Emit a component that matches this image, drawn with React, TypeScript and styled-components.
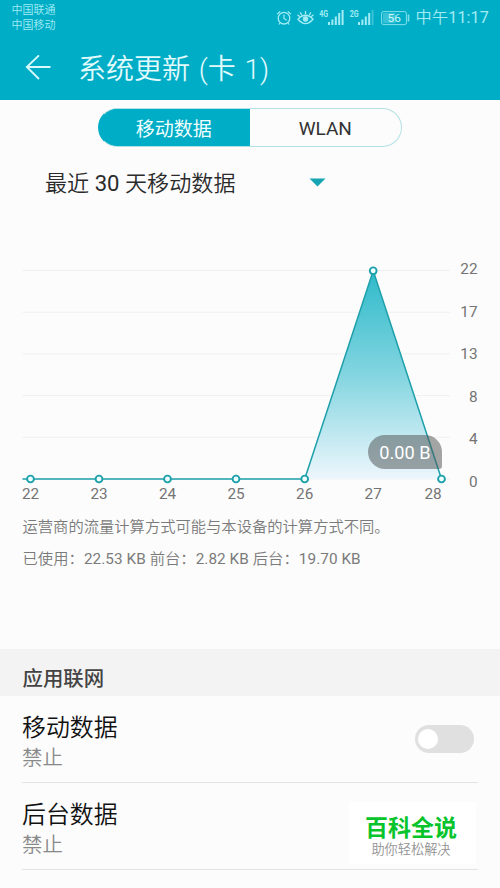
import React from "react";
import styled, { createGlobalStyle } from "styled-components";

const GlobalStyle = createGlobalStyle`
  * { box-sizing: border-box; }
  body {
    margin: 0;
    background: #fcfcfc;
    font-family: Roboto, "Noto Sans CJK SC", sans-serif;
  }
`;

const Screen = styled.main`
  width: 500px;
  height: 888px;
  overflow: hidden;
  background: #fcfcfc;
  display: flex;
  flex-direction: column;
`;

const Header = styled.header`
  height: 100px;
  flex: none;
  background: #00adc6;
  color: #e2fbfd;
`;

const StatusBar = styled.div`
  height: 35px;
  display: flex;
  justify-content: space-between;
  padding: 1px 11px 0 11.5px;
  color: #a2ecf5;
`;

const Carriers = styled.div`
  padding-top: 2px;
  font-size: 11px;
  line-height: 15px;
  font-weight: 350;
  white-space: nowrap;
`;

const StatusRight = styled.div`
  display: flex;
  align-items: center;
  height: 32px;
`;

const Latin = styled.span`
  font-weight: 400;
`;

const Clock = styled.span`
  font-size: 16.2px;
  line-height: 20px;
  font-weight: 350;
  letter-spacing: 0.1px;
  white-space: nowrap;
  margin: 1px 0 0 6px;
`;

const TitleBar = styled.div`
  display: flex;
  align-items: center;
  height: 65px;
  padding-left: 25px;
  gap: 27px;
`;

const Title = styled.h1`
  margin: 5px 0 0;
  font-size: 28px;
  line-height: 36px;
  font-weight: 350;
  word-spacing: 2px;
  white-space: nowrap;
`;

const Tabs = styled.div`
  display: flex;
  flex: none;
  width: 304px;
  height: 39px;
  margin: 8px 0 0 98px;
  border: 1px solid #b2e1e4;
  border-left-color: #00adc6;
  border-radius: 20px;
  background: linear-gradient(90deg, #00adc6 50%, transparent 50%) border-box;
  overflow: hidden;
`;

const Tab = styled.button<{ $active?: boolean }>`
  flex: 1;
  margin: ${(p) => (p.$active ? "-1px 0 -1px -1px" : "0")};
  padding: ${(p) => (p.$active ? "4px 0 0" : "2px 0 0")};
  border: 0;
  background: ${(p) => (p.$active ? "#00adc6" : "transparent")};
  color: ${(p) => (p.$active ? "#f0ffff" : "#333")};
  font-family: inherit;
  font-size: 19px;
  line-height: 24px;
`;

const PeriodSelect = styled.div`
  display: flex;
  flex: none;
  align-items: center;
  justify-content: space-between;
  width: 281px;
  height: 34px;
  margin: 19px 0 8px 45px;
  color: #2b2b2b;
  font-size: 22.1px;
  line-height: 30px;
  font-weight: 350;
  white-space: nowrap;
  svg { margin-bottom: 2px; }
`;

const ChartArea = styled.section`
  position: relative;
  flex: none;
  height: 300px;
  svg { display: block; }
`;

const ValueBubble = styled.div`
  position: absolute;
  left: 368px;
  top: 227px;
  width: 74px;
  height: 34px;
  border-radius: 17px 17px 3px 17px;
  background: rgba(80, 84, 85, 0.52);
  color: #fff;
  font-size: 18.2px;
  line-height: 35px;
  text-align: center;
`;

const Notes = styled.section`
  flex: none;
  height: 141px;
  padding: 4px 0 0 22.5px;
  color: #7b7b7b;
  font-size: 15.3px;
  font-weight: 350;
  line-height: 31.5px;
  white-space: nowrap;
  p { margin: 0; }
`;

const Usage = styled.p`
  letter-spacing: 0.06px;
`;

const SectionTitle = styled.h2`
  flex: none;
  margin: 0;
  height: 47px;
  padding: 7px 0 0 22.5px;
  background: #f3f3f3;
  color: #444;
  font-size: 20.4px;
  font-weight: 500;
  line-height: 46px;
`;

const SettingRow = styled.div`
  position: relative;
  display: flex;
  flex: none;
  align-items: center;
  justify-content: space-between;
  height: 87px;
  margin: 0 22px;
  padding-right: 4px;
  border-bottom: 1px solid #e3e3e3;
`;

const SettingText = styled.div`
  display: flex;
  flex-direction: column;
  padding-top: 5px;
`;

const SettingName = styled.span`
  color: #111;
  font-size: 23.9px;
  font-weight: 350;
  line-height: 32px;
`;

const SettingState = styled.span`
  color: #898989;
  font-size: 20.4px;
  font-weight: 350;
  line-height: 28px;
`;

const Switch = styled.span`
  display: flex;
  align-items: center;
  width: 59px;
  height: 28px;
  padding-left: 3px;
  border-radius: 14px;
  background: #e0e0e0;
`;

const Knob = styled.span`
  width: 20px;
  height: 20px;
  border-radius: 50%;
  background: #fff;
`;

const Watermark = styled.div`
  position: absolute;
  left: 327px;
  top: 19px;
  width: 127px;
  height: 62px;
  padding-top: 14px;
  background: #fff;
  text-align: center;
  white-space: nowrap;
`;

const Brand = styled.div`
  padding-right: 3px;
  color: #08c42c;
  font-size: 23px;
  line-height: 25px;
  font-weight: 700;
`;

const Slogan = styled.div`
  padding-right: 3px;
  color: #929292;
  font-size: 13.2px;
  font-weight: 350;
  line-height: 18px;
`;

const bars = [3, 5.5, 8.5, 12, 15];

function StatusIcons() {
  return (
    <svg width="134" height="32" viewBox="276 0 134 32" fill="none" stroke="#a2ecf5">
      <circle cx="284" cy="17.2" r="5.8" strokeWidth="1.3" />
      <path d="M284 13.5v4l2.7 1.7M277.2 13.2l3-2.8M290.8 13.2l-3-2.8M280 22l-1.2 1.5M288 22l1.2 1.5" strokeWidth="1.2" />
      <path d="M298 18.2Q305.5 10.3 313 18.2Q305.5 27 298 18.2Z" strokeWidth="1.4" />
      <circle cx="305.5" cy="18" r="2.4" fill="#a2ecf5" strokeWidth="1" />
      <path d="M305.5 10v3.3M300.2 11.2l1.5 3M310.8 11.2l-1.5 3M297.5 13.8l2.4 2M313.5 13.8l-2.4 2" strokeWidth="1.3" />
      <g fill="#a2ecf5" stroke="none">
        <text transform="translate(319.3 15.5) scale(.74 1)" fontSize="9.6" fontWeight="700">4G</text>
        <text transform="translate(349.8 15.5) scale(.74 1)" fontSize="9.6" fontWeight="700">2G</text>
        {bars.map((h, i) => (
          <rect key={i} x={328 + i * 3.4} y={24 - h} width="2" height={h} />
        ))}
        {bars.map((h, i) => (
          <rect key={i} x={358 + i * 3.4} y={24 - h} width="2" height={h} opacity={i === 4 ? 0.35 : 1} />
        ))}
      </g>
      <rect x="381.6" y="10.6" width="24.8" height="13" rx="1.8" strokeWidth="1" opacity=".8" />
      <rect x="383" y="12" width="12.5" height="10.2" fill="#a2ecf5" stroke="none" opacity=".35" />
      <path d="M408.5 13.5v7" strokeWidth="1.6" opacity=".8" />
      <text x="394.2" y="21.2" textAnchor="middle" fontSize="11.8" fill="#c8f8fb" stroke="none">56</text>
    </svg>
  );
}

const BASELINE = 271;
const points = [
  { day: 22, x: 30.5, y: BASELINE },
  { day: 23, x: 99, y: BASELINE },
  { day: 24, x: 167.5, y: BASELINE },
  { day: 25, x: 236, y: BASELINE },
  { day: 26, x: 304.7, y: BASELINE },
  { day: 27, x: 373.2, y: 62.8 },
  { day: 28, x: 441.5, y: BASELINE, labelX: 433 },
];
const ticks = [22, 17, 13, 8, 4, 0];

function UsageChart() {
  return (
    <svg width="500" height="300" viewBox="0 0 500 300">
      <defs>
        <linearGradient id="usageFill" x1="0" y1="0" x2="0" y2="1">
          <stop offset="0" stopColor="#2fbaca" />
          <stop offset="0.5" stopColor="#83d5e0" />
          <stop offset="1" stopColor="#edf6fc" />
        </linearGradient>
      </defs>
      {ticks.map((t, i) => (
        <g key={t}>
          <path d={`M22.5 ${62.5 + i * 41.7}H450`} stroke="#f0f0f0" />
          <text x="477.5" y={66 + i * 42.5} textAnchor="end" fontSize="15.3" fill="#747474">{t}</text>
        </g>
      ))}
      <path d={`M304.7 ${BASELINE}L373.2 62.8L441.5 ${BASELINE}Z`} fill="url(#usageFill)" />
      <path
        d={`M22.5 ${BASELINE}H304.7L373.2 62.8L441.5 ${BASELINE}`}
        fill="none"
        stroke="#1ea0aa"
        strokeWidth="1.5"
        strokeLinejoin="bevel"
      />
      {points.map((p) => (
        <g key={p.day}>
          <circle cx={p.x} cy={p.y} r="3.4" fill="#eeffff" stroke="#1ea0aa" strokeWidth="1.9" />
          <text x={p.labelX ?? p.x} y="290.7" textAnchor="middle" fontSize="15.3" fill="#747474">{p.day}</text>
        </g>
      ))}
    </svg>
  );
}

export default function App() {
  return (
    <Screen>
      <GlobalStyle />
      <Header>
        <StatusBar>
          <Carriers>
            <div>中国联通</div>
            <div>中国移动</div>
          </Carriers>
          <StatusRight>
            <StatusIcons />
            <Clock>中午<Latin>11:17</Latin></Clock>
          </StatusRight>
        </StatusBar>
        <TitleBar>
          <svg width="26" height="26" viewBox="0 0 26 26" fill="none" stroke="#d8fafc" strokeWidth="1.8">
            <path d="M25.5 12H1.8M14 0.3L1.8 12L14 24" />
          </svg>
          <Title>系统更新 (卡 1)</Title>
        </TitleBar>
      </Header>
      <Tabs>
        <Tab $active>移动数据</Tab>
        <Tab>WLAN</Tab>
      </Tabs>
      <PeriodSelect>
        <span>最近<Latin> 30 </Latin>天移动数据</span>
        <svg width="17" height="9" viewBox="0 0 17 9">
          <path d="M0.5 0.5H16.5L8.5 8.5Z" fill="#17a5b4" />
        </svg>
      </PeriodSelect>
      <ChartArea>
        <UsageChart />
        <ValueBubble>0.00 B</ValueBubble>
      </ChartArea>
      <Notes>
        <p>运营商的流量计算方式可能与本设备的计算方式不同。</p>
        <Usage>
          已使用：<Latin>22.53 KB </Latin>前台：<Latin>2.82 KB </Latin>后台：<Latin>19.70 KB</Latin>
        </Usage>
      </Notes>
      <SectionTitle>应用联网</SectionTitle>
      <SettingRow>
        <SettingText>
          <SettingName>移动数据</SettingName>
          <SettingState>禁止</SettingState>
        </SettingText>
        <Switch>
          <Knob />
        </Switch>
      </SettingRow>
      <SettingRow>
        <SettingText>
          <SettingName>后台数据</SettingName>
          <SettingState>禁止</SettingState>
        </SettingText>
        <Watermark>
          <Brand>百科全说</Brand>
          <Slogan>助你轻松解决</Slogan>
        </Watermark>
      </SettingRow>
    </Screen>
  );
}
